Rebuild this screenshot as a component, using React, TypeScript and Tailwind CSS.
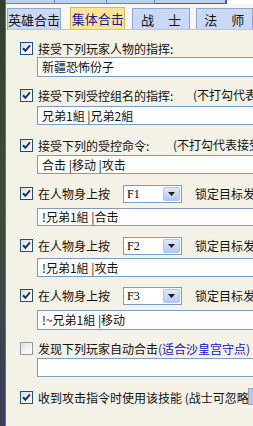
import React from 'react';

type Group = {
  label: string;
  note?: string;
  noteX?: number;
  blueNote?: string;
  checked: boolean;
  combo?: string;
  value?: string;
  rowTop: number;
  inputTop?: number;
  inputH?: number;
};

const groups: Group[] = [
  { label: '接受下列玩家人物的指挥:', checked: true, value: '新疆恐怖份子', rowTop: 10, inputTop: 0, inputH: 20 },
  { label: '接受下列受控组名的指挥:', note: '(不打勾代表接受所有', noteX: 173, checked: true, value: '兄弟1組 |兄弟2組', rowTop: 10, inputTop: 2, inputH: 19 },
  { label: '接受下列的受控命令:', note: '(不打勾代表接受所有', noteX: 153, checked: true, value: '合击 |移动 |攻击', rowTop: 12, inputTop: 1, inputH: 19 },
  { label: '在人物身上按', combo: 'F1', checked: true, value: '!兄弟1組 |合击', rowTop: 11, inputTop: 6, inputH: 18 },
  { label: '在人物身上按', combo: 'F2', checked: true, value: '!兄弟1組 |攻击', rowTop: 11, inputTop: 4, inputH: 19 },
  { label: '在人物身上按', combo: 'F3', checked: true, value: '!~兄弟1組 |移动', rowTop: 10, inputTop: 6, inputH: 20 },
  { label: '发现下列玩家自动合击', blueNote: '(适合沙皇宫守点)', checked: false, value: '', rowTop: 10, inputTop: 1, inputH: 19 },
  { label: '收到攻击指令时使用该技能 (战士可忽略', checked: true, rowTop: 12 },
];

function CheckBox({ checked }: { checked: boolean }) {
  return (
    <div
      className={`w-[13px] h-[13px] shrink-0 border ${checked ? 'border-[#1c5180]' : 'border-[#8f9aa6]'} bg-gradient-to-br from-[#dcdcd6] via-[#f2f2ee] to-white flex items-center justify-center`}
    >
      {checked && (
        <svg width="9" height="9" viewBox="0 0 9 9">
          <path d="M1 4.2 L3.4 6.8 L8 1.4" fill="none" stroke="#1f2f78" strokeWidth="2" />
        </svg>
      )}
    </div>
  );
}

function Combo({ value }: { value: string }) {
  return (
    <div className="ml-[13px] w-[59px] h-[18px] border border-[#7f9db9] bg-white flex shrink-0">
      <div className="flex-1 pl-[3px] flex items-center text-[12px] font-['Liberation_Serif',serif] text-black">{value}</div>
      <div className="w-[17px] m-[1px] rounded-[2px] bg-gradient-to-b from-[#e0e9fb] to-[#b5c8f2] border border-[#b3c6ec] flex items-center justify-center">
        <svg width="7" height="4" viewBox="0 0 7 4">
          <path d="M0 0 L7 0 L3.5 4 Z" fill="#1d1d1d" />
        </svg>
      </div>
    </div>
  );
}

export default function App() {
  return (
    <div className="w-[253px] h-[426px] overflow-hidden flex bg-[#f4f1e6] font-['Noto_Sans_CJK_SC','Noto_Sans',sans-serif] text-[12px] leading-none text-[#111]">
      <div className="w-[6px] shrink-0 bg-gradient-to-b from-[#34402f] via-[#3f4c36] to-[#3a3d5c] border-r border-[#6b7565]" />
      <div className="flex-1 min-w-0 flex flex-col">
        {/* cut-off upper tab row */}
        <div className="h-[4px] flex shrink-0">
          <div className="w-[49px] bg-[#bcd0ef] border-r border-b border-[#6285be]" />
          <div className="w-[52px] bg-[#bcd0ef] border-r border-b border-[#6285be]" />
          <div className="w-[48px] bg-[#bcd0ef] border-r border-b border-[#6285be]" />
          <div className="w-[72px] bg-[#bcd0ef] border-r-2 border-b border-[#3d5f98]" />
          <div className="flex-1 bg-white" />
        </div>
        <div className="h-[4px] bg-[#f7f6f1] shrink-0" />
        {/* tab row */}
        <div className="h-[22px] flex items-end bg-[#f7f6f1] border-b border-[#c8c4b4] shrink-0 whitespace-nowrap text-[13px]">
          <div className="ml-[1px] w-[56px] h-[21px] bg-[#c9d9f5] border border-b-0 border-[#8fa7cf] flex items-center justify-center">英雄合击</div>
          <div className="ml-[9px] w-[58px] h-[22px] bg-[#ffe493] border border-b-0 border-[#d7b75a] flex items-center justify-center text-[#1a1890]">集体合击</div>
          <div className="ml-[7px] w-[60px] h-[21px] bg-[#c9d9f5] border border-b-0 border-[#8fa7cf] flex items-center justify-center">战<span className="w-[14px]" />士</div>
          <div className="ml-[6px] w-[60px] h-[21px] bg-[#c9d9f5] border border-b-0 border-[#8fa7cf] flex items-center justify-center">法<span className="w-[14px]" />师</div>
        </div>
        {/* content */}
        <div className="flex flex-col pl-[14px]">
          {groups.map((g, i) => (
            <div key={i} style={{ marginTop: g.rowTop }} className="flex flex-col">
              <div className="h-[17px] flex items-center whitespace-nowrap relative">
                <CheckBox checked={g.checked} />
                <span className="ml-[5px]">{g.label}</span>
                {g.combo && (
                  <>
                    <Combo value={g.combo} />
                    <span className="ml-[13px]">锁定目标发</span>
                  </>
                )}
                {g.blueNote && <span className="text-[#1010c8]">{g.blueNote}</span>}
                {g.note && (
                  <span className="absolute top-[2px]" style={{ left: g.noteX }}>{g.note}</span>
                )}
                {i === groups.length - 1 && (
                  <div className="absolute left-[228px] top-[-1px] w-[10px] h-[17px] bg-[#b7c9ee] border border-[#8fa7cf]" />
                )}
              </div>
              {g.inputH !== undefined && (
                <div
                  style={{ marginTop: g.inputTop, height: g.inputH }}
                  className="ml-[17px] w-[260px] border border-[#7f9db9] bg-white flex items-center pl-[4px] whitespace-nowrap"
                >
                  {g.value}
                </div>
              )}
            </div>
          ))}
        </div>
      </div>
    </div>
  );
}
